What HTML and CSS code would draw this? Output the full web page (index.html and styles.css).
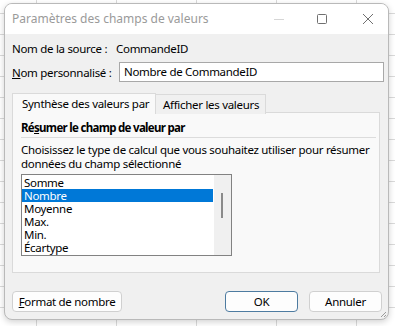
FILE: index.html
```html
<!DOCTYPE html>
<html lang="fr">
<head>
<meta charset="utf-8">
<link rel="stylesheet" href="styles.css">
</head>
<body>
<div class="dialog">
  <div class="titlebar">
    <span class="title">Paramètres des champs de valeurs</span>
    <div class="controls">
      <svg class="ctl min" width="12" height="12" viewBox="0 0 12 12"><line x1="1" y1="6.5" x2="11" y2="6.5" stroke="#d6d6d6" stroke-width="1"/></svg>
      <svg class="ctl max" width="12" height="12" viewBox="0 0 12 12"><rect x="1.5" y="1.5" width="9" height="9" rx="1" fill="none" stroke="#707070" stroke-width="1"/></svg>
      <svg class="ctl close" width="12" height="12" viewBox="0 0 12 12"><path d="M1 1 L11 11 M11 1 L1 11" stroke="#707070" stroke-width="1"/></svg>
    </div>
  </div>
  <div class="content">
    <div class="row src">
      <span class="lbl lbl-src">Nom de la source :</span>
      <span>CommandeID</span>
    </div>
    <div class="row name">
      <span class="lbl lbl-name"><u>N</u>om personnalisé :</span>
      <div class="input">Nombre de CommandeID</div>
    </div>
    <div class="tabs">
      <div class="tab active">Synthèse des valeurs par</div>
      <div class="tab">Afficher les valeurs</div>
    </div>
    <div class="panel">
      <div class="heading">Ré<u>s</u>umer le champ de valeur par</div>
      <div class="sep"></div>
      <p class="desc"><span class="line">Choisissez le type de calcul que vous souhaitez utiliser pour résumer</span><span class="line">données du champ sélectionné</span></p>
      <div class="listbox">
        <ul class="items">
          <li>Somme</li>
          <li class="sel">Nombre</li>
          <li>Moyenne</li>
          <li>Max.</li>
          <li>Min.</li>
          <li>Écartype</li>
        </ul>
        <div class="scroll"><div class="thumb"></div></div>
      </div>
    </div>
    <div class="buttons">
      <button class="btn fmt"><u>F</u>ormat de nombre</button>
      <div class="spacer"></div>
      <button class="btn ok">OK</button>
      <button class="btn cancel">Annuler</button>
    </div>
  </div>
  <svg class="grip" width="7" height="7" viewBox="0 0 7 7"><path d="M6 1 L1 6 M6 4 L4 6" stroke="#9a9a9a" stroke-width="1"/></svg>
</div>
</body>
</html>
```
FILE: styles.css
```css
* { box-sizing: border-box; }
html, body { margin: 0; padding: 0; }
body {
  width: 395px;
  height: 326px;
  overflow: hidden;
  font-family: "Noto Sans", "Open Sans", sans-serif;
  font-size: 11.5px;
  letter-spacing: -0.3px;
  white-space: nowrap;
  color: #000;
  background-color: #fff;
  background-image:
    repeating-linear-gradient(to right, transparent 0, transparent 36px, #dadada 36px, #dadada 37px, transparent 37px, transparent 80px),
    repeating-linear-gradient(to bottom, transparent 0, transparent 13px, #dadada 13px, #dadada 14px, transparent 14px, transparent 21px);
  background-size: 80px 100%, 100% 21px;
  background-position: 0 0, 0 0;
  padding: 3px 0 0 4px;
}
.dialog {
  position: relative;
  width: 385px;
  height: 317px;
  border: 1px solid #b9b9b9;
  border-radius: 8px;
  background: #f0f0f0;
  overflow: hidden;
  box-shadow: 0 2px 6px rgba(0,0,0,0.18);
}
.titlebar {
  height: 30px;
  background: #fff;
  display: flex;
  align-items: center;
  padding-left: 7px;
}
.title { color: #9a9a9a; font-size: 12px; letter-spacing: 0; flex: 1; padding-bottom: 1px; }
.controls { display: flex; align-items: center; height: 100%; }
.ctl { display: block; }
.min { margin-right: 31px; }
.max { margin-right: 34px; }
.close { margin-right: 14px; }
.content { padding: 6px 0 0 7px; }
.row { display: flex; align-items: center; }
.src { height: 16px; }
.name { margin-top: 6px; height: 20px; }
.lbl-src { width: 104px; }
.lbl-name { width: 107px; }
.input {
  width: 265px;
  height: 20px;
  background: #fff;
  border: 1px solid #a8a8a8;
  padding-left: 4px;
  line-height: 18px;
}
.tabs { display: flex; margin-top: 11px; height: 20px; }
.tab {
  height: 20px;
  line-height: 19px;
  border: 1px solid #dadada;
  border-bottom: none;
  background: #f0f0f0;
  margin-top: 1px;
}
.tab.active {
  width: 144px;
  background: #f9f9f9;
  padding-left: 9px;
  margin-top: 0;
  height: 21px;
  position: relative;
  z-index: 1;
}
.tab:not(.active) { width: 110px; padding-left: 7px; border-left: none; }
.panel {
  width: 368px;
  height: 161px;
  border: 1px solid #dadada;
  background: #f9f9f9;
  padding: 7px 3px 0 8px;
  margin-top: -1px;
}
.heading { font-weight: bold; line-height: 16px; letter-spacing: -0.7px; }
.sep { height: 1px; background: #dcdcdc; margin-top: 1px; }
.desc { margin: 5px 0 0 0; line-height: 14px; }
.line { display: block; }
.listbox {
  margin-top: 3px;
  width: 211px;
  height: 82px;
  border: 1px solid #828282;
  background: #fff;
  display: flex;
}
.items { list-style: none; margin: 0; padding: 1px 0 0 0; width: 191px; }
.items li { height: 13px; line-height: 13px; padding-left: 2px; }
.items li.sel { background: #0078d7; color: #fff; }
.scroll { width: 17px; background: #f0f0f0; position: relative; margin-left: 1px; }
.thumb { position: absolute; left: 7px; top: 18px; width: 2px; height: 25px; background: #8a8a8a; }
.buttons { display: flex; margin-top: 18px; padding-right: 6px; }
.spacer { flex: 1; }
.btn {
  font: inherit;
  letter-spacing: inherit;
  color: #000;
  height: 21px;
  background: #fdfdfd;
  border: 1px solid #d0d0d0;
  border-radius: 4px;
  padding: 0;
  line-height: 18px;
}
.fmt { width: 110px; }
.ok { width: 73px; border-color: #4d7ba0; }
.cancel { width: 73px; margin-left: 11px; }
.grip { position: absolute; right: 1px; bottom: 1px; }
```
